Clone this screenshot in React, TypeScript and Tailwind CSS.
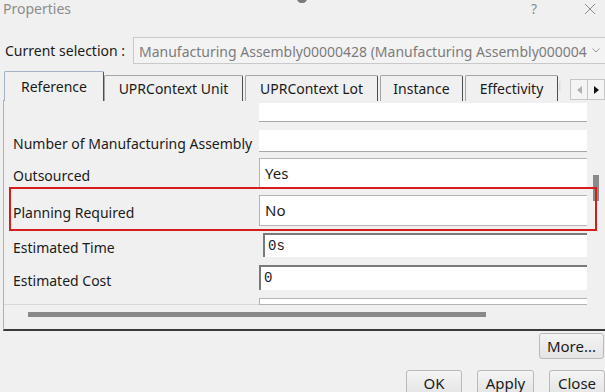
import React from 'react';

const font = { fontFamily: '"Noto Sans", "Open Sans", sans-serif' };

const Tab: React.FC<{ label: string; selected?: boolean; w: string }> = ({ label, selected, w }) => (
  <div
    className={
      selected
        ? `${w} h-[30px] -mb-px z-10 flex items-center justify-center border border-b-0 border-[#a3b2c4] border-r-[#4d4d4d] bg-[#f0f0f0] rounded-t-[2px] text-[14px] text-[#1b1b1b]`
        : `${w} h-[26px] mt-[4px] flex items-center justify-center border border-b-0 border-[#a5a5a5] border-r-[#4d4d4d] bg-[#f0f0f0] rounded-t-[2px] text-[14px] text-[#1b1b1b]`
    }
  >
    {label}
  </div>
);

const Btn: React.FC<{ label: string; w: string }> = ({ label, w }) => (
  <div className={`${w} h-[26px] flex items-center justify-center rounded-[3px] border border-[#b9b9b9] bg-gradient-to-b from-[#f4f4f4] to-[#e4e4e4] text-[15px] text-[#1b1b1b]`}>
    {label}
  </div>
);

export default function App() {
  return (
    <div className="relative w-[605px] h-[392px] overflow-hidden bg-[#f0f0f0] text-[#1b1b1b]" style={font}>
      {/* title bar */}
      <div className="relative h-[17px] flex items-center">
        <span className="ml-[3px] text-[14px] text-[#8c8c8c]">Properties</span>
        <div className="absolute left-[297px] top-[-6px] w-[10px] h-[9px] rounded-full bg-[#7a7a7a]" />
        <span className="ml-auto mr-[47px] text-[14px] text-[#8c8c8c]">?</span>
        <svg width="12" height="12" viewBox="0 0 12 12" className="mr-[9px]">
          <path d="M1 1L11 11M11 1L1 11" stroke="#8c8c8c" strokeWidth="1" />
        </svg>
      </div>

      {/* current selection */}
      <div className="mt-[20px] h-[27px] flex items-center">
        <span className="ml-[5px] w-[128px] text-[14px]">Current selection :</span>
        <div className="flex-1 min-w-0 h-full flex items-center border border-r-0 border-[#c9c9c9] bg-[#f3f3f3]">
          <div className="flex-1 min-w-0 overflow-hidden">
            <span className="ml-[5px] whitespace-nowrap text-[14px] text-[#7c7c7c]">
              Manufacturing Assembly00000428 (Manufacturing Assembly00000428)
            </span>
          </div>
          <div className="shrink-0 w-[18px] h-full flex items-center justify-center">
            <svg width="8" height="5" viewBox="0 0 8 5">
              <path d="M0.5 0.5L4 4L7.5 0.5" fill="none" stroke="#9a9a9a" strokeWidth="1" />
            </svg>
          </div>
        </div>
      </div>

      {/* tab strip */}
      <div className="mt-[7px] h-[29px] flex items-start">
        <div className="ml-[4px] flex items-start">
          <Tab label="Reference" selected w="w-[100px]" />
          <Tab label="UPRContext Unit" w="w-[139px]" />
          <div className="w-[2px]" />
          <Tab label="UPRContext Lot" w="w-[133px]" />
          <div className="w-[2px]" />
          <Tab label="Instance" w="w-[83px]" />
          <div className="w-[2px]" />
          <Tab label="Effectivity" w="w-[93px]" />
        </div>
        <svg width="6" height="28" viewBox="0 0 6 28" className="ml-[1px] mt-[1px]">
          <path d="M2 0L3 3L2 6L3 9L2 12L3 15L2 18L3 21L2 24L3 28" fill="none" stroke="#9c9c9c" strokeWidth="1" />
        </svg>
        <div className="ml-[9px] mt-[8px] flex">
          <div className="w-[18px] h-[21px] flex items-center justify-center border border-[#c6c6c6] bg-[#f4f4f4]">
            <svg width="5" height="8" viewBox="0 0 5 8"><path d="M5 0L0 4L5 8Z" fill="#b0b0b0" /></svg>
          </div>
          <div className="w-[17px] h-[21px] flex items-center justify-center border border-l-0 border-[#c6c6c6] bg-[#f4f4f4]">
            <svg width="5" height="8" viewBox="0 0 5 8"><path d="M0 0L5 4L0 8Z" fill="#111" /></svg>
          </div>
        </div>
      </div>

      {/* tab panel */}
      <div className="relative ml-[3px] h-[231px] flex border-l border-[#a3b2c4] border-b-2 border-b-[#3a3a3a]">
        <div className="w-[583px] flex flex-col text-[14px]">
          <div className="h-[28px] flex">
            <div className="w-[255px]" />
            <div className="w-[328px] h-[19px] mt-[3px] bg-white border-b border-[#a8a8a8]" />
          </div>
          <div className="h-[30px] flex">
            <div className="w-[255px] pl-[9px] flex items-center whitespace-nowrap">Number of Manufacturing Assembly</div>
            <div className="w-[328px] h-[22px] mt-[2px] bg-white border-b border-[#a8a8a8]" />
          </div>
          <div className="h-[34px] flex">
            <div className="w-[255px] pl-[9px] flex items-center">Outsourced</div>
            <div className="w-[328px] h-[30px] bg-white border-t border-l border-[#b4b4b4] flex items-center pl-[5px] text-[15px]">Yes</div>
          </div>
          <div className="h-[40px] flex">
            <div className="w-[255px] pl-[9px] flex items-center">Planning Required</div>
            <div className="w-[328px] h-[31px] mt-[3px] bg-white border-t border-l border-b border-[#b4b4b4] flex items-center pl-[5px] text-[15px]">No</div>
          </div>
          <div className="h-[30px] flex">
            <div className="w-[259px] pl-[9px] flex items-center">Estimated Time</div>
            <div
              className="w-[324px] h-[24px] mt-[1px] bg-white border-t-2 border-l-2 border-[#7a7a7a] flex items-center pl-[3px] text-[14px]"
              style={{ fontFamily: '"Liberation Mono", monospace' }}
            >
              0s
            </div>
          </div>
          <div className="h-[36px] flex">
            <div className="w-[255px] pl-[9px] flex items-center">Estimated Cost</div>
            <div
              className="w-[328px] h-[25px] mt-[3px] bg-white border-t-2 border-l-2 border-[#7a7a7a] flex items-center pl-[3px] text-[14px]"
              style={{ fontFamily: '"Liberation Mono", monospace' }}
            >
              0
            </div>
          </div>
          <div className="h-[7px] flex">
            <div className="w-[255px] border-b border-[#d8d8d8]" />
            <div className="w-[328px] bg-white border-t border-l border-b border-[#b4b4b4]" />
          </div>
          <div className="flex-1">
            <div className="ml-[24px] mt-[7px] w-[458px] h-[5px] bg-[#8a8a8a]" />
          </div>
        </div>
        <div className="flex-1 bg-[#f0f0f0]">
          <div className="ml-[6px] mt-[75px] w-[6px] h-[26px] bg-[#8a8a8a]" />
        </div>
        {/* highlight annotation */}
        <div className="absolute left-[5px] top-[87px] w-[588px] h-[44px] border-2 border-[#d71c1c] pointer-events-none" />
      </div>

      {/* buttons */}
      <div className="mt-[2px] flex justify-end pr-[1px]">
        <Btn label="More..." w="w-[65px]" />
      </div>
      <div className="mt-[11px] flex justify-end gap-[15px]">
        <Btn label="OK" w="w-[56px]" />
        <Btn label="Apply" w="w-[57px]" />
        <Btn label="Close" w="w-[56px]" />
      </div>
    </div>
  );
}
